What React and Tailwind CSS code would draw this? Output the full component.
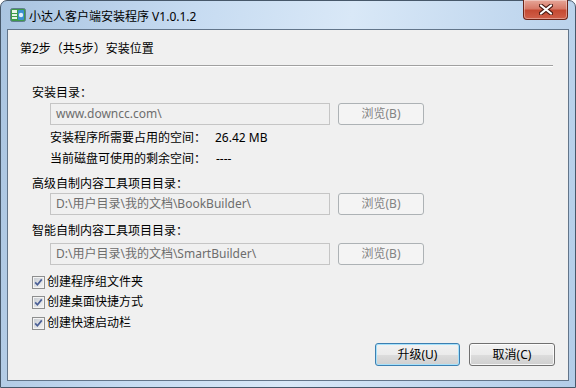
// Installer wizard window (Windows 7 Aero look): step 2 of 5, install location.

function AppIcon() {
  return (
    <svg width="16" height="16" viewBox="0 0 16 16">
      <rect x="0.5" y="1.5" width="15" height="13" rx="2" fill="#3f9a4a" stroke="#5f7d8e" />
      <rect x="2" y="3" width="5" height="3" fill="#e8f4e8" />
      <rect x="2" y="7" width="5" height="2" fill="#e8f4e8" />
      <rect x="2" y="10" width="5" height="2" fill="#e8f4e8" />
      <rect x="8" y="3" width="6" height="10" rx="1" fill="#3a8fd0" />
      <circle cx="11" cy="8" r="2.2" fill="#dff0fb" />
    </svg>
  );
}

function CloseButton() {
  return (
    <div className="ml-auto mr-[7px] -mt-px flex h-[20px] w-[45px] items-center justify-center self-start rounded-b-[4px] border border-t-0 border-[#6b2418] bg-[linear-gradient(to_bottom,#e6a698_0%,#d77a68_45%,#c54a33_55%,#d0604a_100%)] shadow-[inset_0_0_0_1px_rgba(255,255,255,0.35)]">
      <svg width="14" height="11" viewBox="0 0 14 11">
        <path d="M2 1.5 L12 9.5 M12 1.5 L2 9.5" stroke="#4a1a12" strokeWidth="4.2" strokeLinecap="round" />
        <path d="M2 1.5 L12 9.5 M12 1.5 L2 9.5" stroke="#ffffff" strokeWidth="2.2" strokeLinecap="round" />
      </svg>
    </div>
  );
}

function PathRow({ value }) {
  return (
    <div className="flex h-[22px] pl-[18px]">
      <div className="flex w-[280px] items-center border border-[#c5c5c5] bg-[#f0f0f0] pl-[5px] text-[#6d6d6d]">
        {value}
      </div>
      <div className="ml-[8px] flex w-[86px] items-center justify-center rounded-[3px] border border-[#adb2b5] bg-[#f4f4f4] text-[#838383]">
        浏览(B)
      </div>
    </div>
  );
}

function Check({ label, className }) {
  return (
    <div className={`flex h-[16px] items-center ${className}`}>
      <svg width="13" height="13" viewBox="0 0 13 13">
        <defs>
          <linearGradient id="cbg" x1="0" y1="0" x2="1" y2="1">
            <stop offset="0" stopColor="#c9ced4" />
            <stop offset="1" stopColor="#f2f2f2" />
          </linearGradient>
        </defs>
        <rect x="0.5" y="0.5" width="12" height="12" fill="#f4f4f4" stroke="#8e8f8f" />
        <rect x="2" y="2" width="9" height="9" fill="url(#cbg)" />
        <path d="M3.2 6.4 L5.4 8.8 L9.8 3.4" stroke="#4a5f97" strokeWidth="1.7" fill="none" />
      </svg>
      <span className="ml-[2px]">{label}</span>
    </div>
  );
}

function WinButton({ children, primary }) {
  return (
    <div
      className={`flex h-[23px] items-center justify-center rounded-[3px] border bg-[linear-gradient(to_bottom,#f2f2f2_0%,#ebebeb_50%,#dddddd_51%,#cfcfcf_100%)] ${
        primary
          ? 'w-[85px] border-[#3c7fb1] shadow-[inset_0_0_0_1px_#a6e1fb]'
          : 'w-[86px] border-[#707070] shadow-[inset_0_0_0_1px_rgba(255,255,255,0.8)]'
      }`}
    >
      {children}
    </div>
  );
}

export default function App() {
  return (
    <div className="h-[388px] w-[576px] overflow-hidden bg-white font-['Noto_Sans','Noto_Sans_CJK_SC',sans-serif] text-[12px] leading-[16px] text-black">
      <div className="flex h-[388px] w-[576px] flex-col rounded-t-[7px] border border-[#47586a] bg-[linear-gradient(100deg,#a9c4e0_0%,#c6dbf1_30%,#d9e8f7_55%,#c2d8ef_80%,#b3cde8_100%)]">
        {/* Title bar */}
        <div className="flex h-[28px] items-center">
          <div className="ml-[9px]">
            <AppIcon />
          </div>
          <span className="ml-[3px] mt-[3px] text-[12px] text-black">小达人客户端安装程序 V1.0.1.2</span>
          <CloseButton />
        </div>

        {/* Client area */}
        <div className="mx-[6px] flex h-[352px] flex-col border border-[#62758a] bg-[#f0f0f0]">
          <div className="pl-[12px] pt-[11px]">第2步（共5步）安装位置</div>
          <div className="ml-[12px] mr-[15px] mt-[8px] h-[2px] border-t border-b border-t-[#a0a0a0] border-b-white" />

          <div className="flex flex-col pl-[24px]">
            <div className="mt-[18px]">安装目录：</div>
            <div className="mt-[2px]">
              <PathRow value="www.downcc.com\" />
            </div>
            <div className="mt-[5px] flex pl-[18px]">
              <span className="w-[165px]">安装程序所需要占用的空间：</span>
              <span>26.42 MB</span>
            </div>
            <div className="mt-[5px] flex pl-[18px]">
              <span className="w-[165px]">当前磁盘可使用的剩余空间：</span>
              <span className="pl-px">----</span>
            </div>

            <div className="mt-[9px]">高级自制内容工具项目目录：</div>
            <div className="mt-[1px]">
              <PathRow value="D:\用户目录\我的文档\BookBuilder\" />
            </div>

            <div className="mt-[8px]">智能自制内容工具项目目录：</div>
            <div className="mt-[4px]">
              <PathRow value="D:\用户目录\我的文档\SmartBuilder\" />
            </div>

            <Check label="创建程序组文件夹" className="mt-[9px]" />
            <Check label="创建桌面快捷方式" className="mt-[4px]" />
            <Check label="创建快速启动栏" className="mt-[5px]" />
          </div>

          <div className="mt-[12px] flex justify-end gap-[9px] pr-[13px]">
            <WinButton primary>升级(U)</WinButton>
            <WinButton>取消(C)</WinButton>
          </div>
        </div>
      </div>
    </div>
  );
}
